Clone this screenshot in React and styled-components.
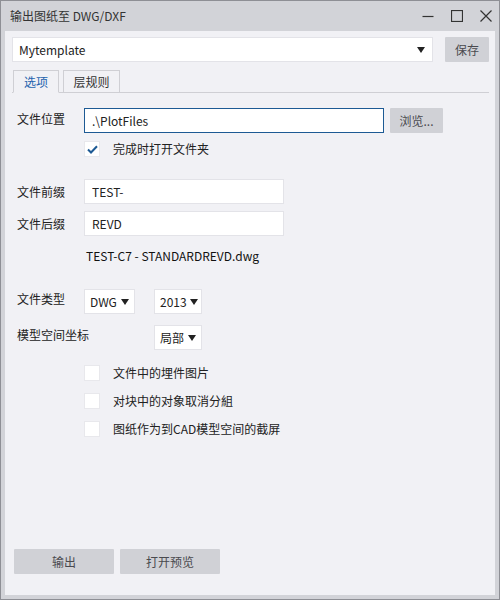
import React, { useState } from 'react'
import styled, { createGlobalStyle } from 'styled-components'

const GlobalStyle = createGlobalStyle`
  html, body {
    margin: 0;
    padding: 0;
    background: #ffffff;
  }
  body {
    font-family: "Noto Sans CJK SC", "Noto Sans", sans-serif;
    font-size: 12px;
    line-height: 16px;
    color: #222;
  }
`

const Window = styled.div`
  box-sizing: border-box;
  width: 500px;
  height: 600px;
  border: 1px solid #8e8f95;
  background: #d2d3d8;
  padding: 0 4px 4px 4px;
  display: flex;
  flex-direction: column;
`

const TitleBar = styled.div`
  height: 30px;
  display: flex;
  align-items: center;
  padding-left: 5px;
  color: #333;
`

const Title = styled.div`
  flex: 1;
`

const WinButtons = styled.div`
  display: flex;
  align-items: center;
  gap: 17px;
  padding-right: 3px;

  svg {
    display: block;
  }
`

const Body = styled.div`
  flex: 1;
  background: #f1f1f5;
  padding: 6px 6px 0 7px;
  display: flex;
  flex-direction: column;
`

const TopRow = styled.div`
  display: flex;
  gap: 12px;
  height: 25px;
`

const Select = styled.div`
  box-sizing: border-box;
  display: flex;
  align-items: center;
  justify-content: space-between;
  background: #fff;
  border: 1px solid #e3e3e8;
  height: 25px;
  padding: 0 ${p => (p.$wide ? '7px' : '5px')} 0 ${p => (p.$wide ? '6px' : '5px')};
  flex: ${p => (p.$wide ? 1 : 'none')};
  width: ${p => (p.$width ? `${p.$width}px` : 'auto')};
  white-space: nowrap;
  color: #222;
`

const Arrow = styled.span`
  flex: none;
  width: 0;
  height: 0;
  border-left: 4.5px solid transparent;
  border-right: 4.5px solid transparent;
  border-top: 6px solid #222;
  margin-left: 3px;
`

const Button = styled.button`
  box-sizing: border-box;
  border: none;
  background: #d0d1d6;
  color: #4a4a4f;
  font-family: inherit;
  font-size: 12px;
  line-height: 16px;
  height: 25px;
  width: ${p => p.$width}px;
  padding: 0;
  border-radius: 1px;
  cursor: pointer;
`

const TabBar = styled.div`
  display: flex;
  gap: 4px;
  margin-top: 8px;
  padding-left: 1px;
  border-bottom: 1px solid #cfcfd4;
  height: 22px;
`

const Tab = styled.div`
  box-sizing: border-box;
  height: 23px;
  width: ${p => p.$width}px;
  border: 1px solid #cfcfd4;
  border-bottom: ${p => (p.$active ? '1px solid #f1f1f5' : '1px solid #cfcfd4')};
  display: flex;
  align-items: center;
  justify-content: center;
  color: ${p => (p.$active ? '#1f63ad' : '#333')};
  background: #f1f1f5;
`

const Form = styled.div`
  display: flex;
  flex-direction: column;
  padding-left: 5px;
`

const Row = styled.div`
  display: flex;
  align-items: center;
  margin-top: ${p => p.$mt || 0}px;
`

const Label = styled.div`
  width: 67px;
  flex: none;
  white-space: nowrap;
  color: #222;
  margin-top: ${p => p.$mt || 0}px;
`

const Input = styled.input`
  box-sizing: border-box;
  height: 25px;
  width: ${p => p.$width}px;
  border: 1px solid ${p => (p.$focus ? '#1d5a94' : '#e3e3e8')};
  background: #fff;
  padding: 0 7px;
  font-family: inherit;
  font-size: 12px;
  color: #222;
  outline: none;
`

const Gap = styled.div`
  width: ${p => p.$w}px;
  flex: none;
`

const CheckRow = styled.label`
  display: flex;
  align-items: center;
  margin-top: ${p => p.$mt || 0}px;
  margin-left: 67px;
  gap: 13px;
  height: 16px;
  cursor: pointer;
`

const Box = styled.span`
  box-sizing: border-box;
  width: 16px;
  height: 16px;
  background: #fff;
  border: 1px solid #e8e8ec;
  display: flex;
  align-items: center;
  justify-content: center;
`

const Preview = styled.div`
  margin-top: 12px;
  margin-left: 69px;
  color: #111;
  height: 16px;
`

const Footer = styled.div`
  margin-top: auto;
  margin-bottom: 21px;
  display: flex;
  gap: 6px;
  padding-left: 2px;
`

const Check = ({ checked, children, mt, onToggle }) => (
  <CheckRow $mt={mt} onClick={onToggle}>
    <Box>
      {checked && (
        <svg width="11" height="9" viewBox="0 0 11 9">
          <path d="M1 4.5 L4 7.5 L10 1.2" fill="none" stroke="#1d5a94" strokeWidth="2" />
        </svg>
      )}
    </Box>
    <span>{children}</span>
  </CheckRow>
)

const App = () => {
  const [checks, setChecks] = useState([true, false, false, false])
  const toggle = i => () => setChecks(c => c.map((v, k) => (k === i ? !v : v)))

  return (
    <>
      <GlobalStyle />
      <Window>
        <TitleBar>
          <Title>输出图纸至 DWG/DXF</Title>
          <WinButtons>
            <svg width="12" height="12" viewBox="0 0 12 12">
              <path d="M0.5 6.5 H11.5" stroke="#333" strokeWidth="1.2" />
            </svg>
            <svg width="12" height="12" viewBox="0 0 12 12">
              <rect x="0.5" y="0.5" width="11" height="11" fill="none" stroke="#333" strokeWidth="1.2" />
            </svg>
            <svg width="12" height="12" viewBox="0 0 12 12">
              <path d="M0.5 0.5 L11.5 11.5 M11.5 0.5 L0.5 11.5" stroke="#333" strokeWidth="1.2" />
            </svg>
          </WinButtons>
        </TitleBar>
        <Body>
          <TopRow>
            <Select $wide>
              <span>Mytemplate</span>
              <Arrow />
            </Select>
            <Button $width={44}>保存</Button>
          </TopRow>

          <TabBar>
            <Tab $active $width={46}>选项</Tab>
            <Tab $width={57}>层规则</Tab>
          </TabBar>

          <Form>
            <Row $mt={15}>
              <Label $mt={-4}>文件位置</Label>
              <Input $width={300} $focus defaultValue=".\PlotFiles" />
              <Gap $w={6} />
              <Button $width={53}>浏览...</Button>
            </Row>
            <Check mt={8} checked={checks[0]} onToggle={toggle(0)}>完成时打开文件夹</Check>

            <Row $mt={22}>
              <Label>文件前缀</Label>
              <Input $width={200} defaultValue="TEST-" />
            </Row>
            <Row $mt={7}>
              <Label>文件后缀</Label>
              <Input $width={200} defaultValue="REVD" />
            </Row>
            <Preview>TEST-C7 - STANDARDREVD.dwg</Preview>

            <Row $mt={25}>
              <Label $mt={-5}>文件类型</Label>
              <Select $width={51}>
                <span>DWG</span>
                <Arrow />
              </Select>
              <Gap $w={19} />
              <Select $width={48}>
                <span>2013</span>
                <Arrow />
              </Select>
            </Row>
            <Row $mt={11}>
              <Label $mt={-6}>模型空间坐标</Label>
              <Gap $w={70} />
              <Select $width={48}>
                <span>局部</span>
                <Arrow />
              </Select>
            </Row>

            <Check mt={15} checked={checks[1]} onToggle={toggle(1)}>文件中的埋件图片</Check>
            <Check mt={12} checked={checks[2]} onToggle={toggle(2)}>对块中的对象取消分組</Check>
            <Check mt={12} checked={checks[3]} onToggle={toggle(3)}>图纸作为到CAD模型空间的截屏</Check>
          </Form>

          <Footer>
            <Button $width={100}>输出</Button>
            <Button $width={100}>打开预览</Button>
          </Footer>
        </Body>
      </Window>
    </>
  )
}

export default App
